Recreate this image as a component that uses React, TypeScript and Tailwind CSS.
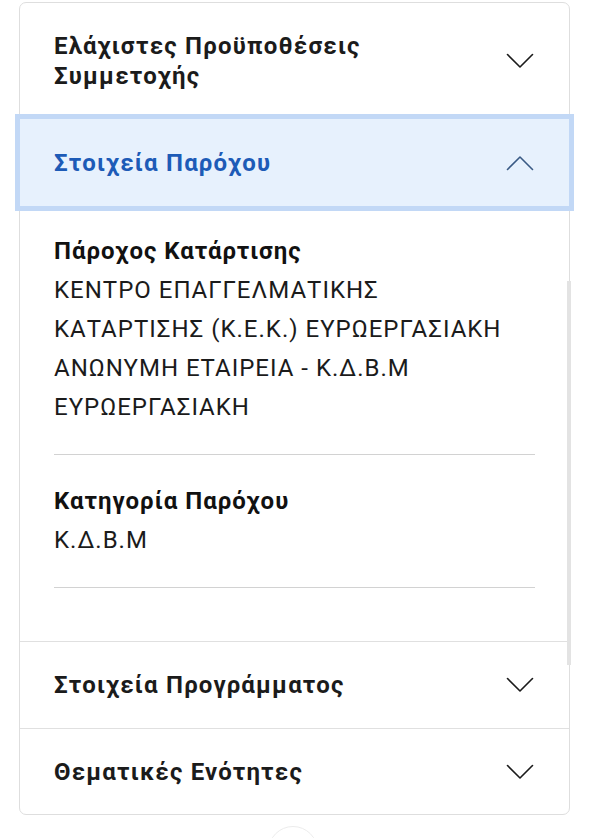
import React from "react";

function Chevron({ up = false, color = "#1b1b1b" }: { up?: boolean; color?: string }) {
    return (
        <svg width="28" height="16" viewBox="0 0 28 16" fill="none" className="shrink-0">
            <polyline
                points={up ? "1.5,14.5 14,2 26.5,14.5" : "1.5,1.5 14,14 26.5,1.5"}
                stroke={color}
                strokeWidth="1.6"
                strokeLinecap="round"
                strokeLinejoin="round"
            />
        </svg>
    );
}

function Field({ label, value }: { label: string; value: string[] }) {
    return (
        <div className="pb-[27px] border-b border-[#d2d2d2]">
            <div className="text-[24px] leading-[39px] font-bold text-[#111] tracking-[1px]">{label}</div>
            {value.map((line) => (
                <div key={line} className="text-[24px] leading-[39px] text-[#1b1b1b] tracking-[1px]">
                    {line}
                </div>
            ))}
        </div>
    );
}

export default function App() {
    return (
        <div
            className="relative w-[590px] h-[838px] bg-white overflow-hidden"
            style={{ fontFamily: "Roboto, 'Noto Sans', sans-serif" }}
        >
            <div className="ml-[19px] mt-[2px] w-[551px] border border-[#dedede] rounded-[7px] bg-white">
                {/* closed section */}
                <div className="h-[116px] flex items-center justify-between pl-[34px] pr-[35px]">
                    <div className="text-[24px] leading-[30px] font-bold text-[#1b1b1b] tracking-[1.2px]">
                        Ελάχιστες Προϋποθέσεις
                        <br />
                        Συμμετοχής
                    </div>
                    <Chevron />
                </div>

                {/* open section */}
                <div className="h-[87px] flex items-center justify-between pl-[34px] pr-[35px] bg-[#e7f1fd] outline-[5px] outline-solid outline-[#c2d8f6]">
                    <div className="text-[24px] font-bold text-[#1d5bb7] tracking-[1.2px]">Στοιχεία Παρόχου</div>
                    <Chevron up color="#3a5a85" />
                </div>

                <div className="px-[34px] pt-[26px] pb-[53px] flex flex-col gap-[27px]">
                    <Field
                        label="Πάροχος Κατάρτισης"
                        value={[
                            "ΚΕΝΤΡΟ ΕΠΑΓΓΕΛΜΑΤΙΚΗΣ",
                            "ΚΑΤΑΡΤΙΣΗΣ (Κ.Ε.Κ.) ΕΥΡΩΕΡΓΑΣΙΑΚΗ",
                            "ΑΝΩΝΥΜΗ ΕΤΑΙΡΕΙΑ - Κ.Δ.Β.Μ",
                            "ΕΥΡΩΕΡΓΑΣΙΑΚΗ",
                        ]}
                    />
                    <Field label="Κατηγορία Παρόχου" value={["Κ.Δ.Β.Μ"]} />
                </div>

                <div className="h-[87px] flex items-center justify-between pl-[34px] pr-[35px] border-t border-[#e0e0e0]">
                    <div className="text-[24px] font-bold text-[#1b1b1b] tracking-[1.2px]">Στοιχεία Προγράμματος</div>
                    <Chevron />
                </div>
                <div className="h-[86px] flex items-center justify-between pl-[34px] pr-[35px] border-t border-[#e0e0e0]">
                    <div className="text-[24px] font-bold text-[#1b1b1b] tracking-[1.2px]">Θεματικές Ενότητες</div>
                    <Chevron />
                </div>
            </div>

            {/* scroll indicator */}
            <div className="absolute left-[567px] top-[281px] w-[4px] h-[384px] bg-[#e3e3e3]" />
            {/* partly hidden round button below */}
            <div className="absolute left-[268px] top-[826px] w-[50px] h-[50px] rounded-full border border-[#ececec]" />
        </div>
    );
}
